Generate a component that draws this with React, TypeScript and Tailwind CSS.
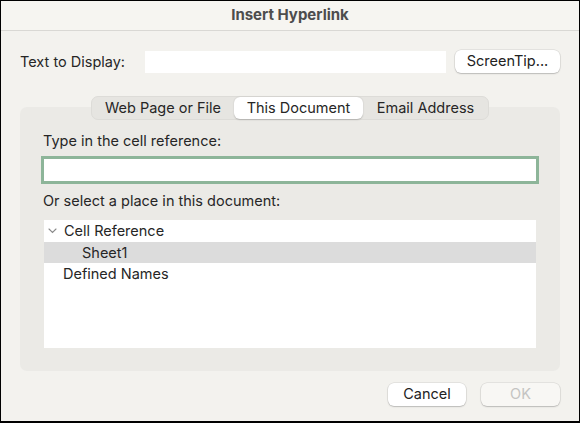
const TABS = [
  { label: "Web Page or File", width: "w-[142px]", active: false },
  { label: "This Document", width: "w-[129px]", active: true },
  { label: "Email Address", width: "w-[125px]", active: false },
];

function DialogButton({
  label,
  width,
  disabled,
}: {
  label: string;
  width: string;
  disabled?: boolean;
}) {
  return (
    <button
      type="button"
      className={`h-[23px] ${width} rounded-[6px] text-[14.5px] leading-none shadow-[0_0_0_0.5px_rgba(0,0,0,0.12),0_1px_1.5px_rgba(0,0,0,0.18)] ${
        disabled ? "bg-[#f8f7f4] text-[#c4c4c2]" : "bg-white text-[#222]"
      }`}
    >
      {label}
    </button>
  );
}

function Chevron() {
  return (
    <svg width="9" height="6" viewBox="0 0 9 6" className="mr-[7px]">
      <path d="M1 1l3.5 3.5L8 1" fill="none" stroke="#8a8a8a" strokeWidth="1.1" strokeLinecap="round" />
    </svg>
  );
}

export default function App() {
  return (
    <div
      className="flex h-[423px] w-[580px] flex-col overflow-hidden border border-b-2 border-black bg-[#f3f2ee] text-[14.5px] text-[#262626]"
      style={{ fontFamily: "Inter, 'Liberation Sans', sans-serif" }}
    >
      <div className="flex h-[30px] items-center justify-center border-b border-[#d9d8d4] bg-[#f6f5f1]">
        <span className="text-[15px] font-bold text-[#4d4d4d]">Insert Hyperlink</span>
      </div>

      <div className="mt-[19px] flex items-center pl-[19px]">
        <label className="w-[125px]">Text to Display:</label>
        <div className="h-[22px] w-[301px] bg-white" />
        <div className="ml-[9px]">
          <DialogButton label="ScreenTip..." width="w-[105px]" />
        </div>
      </div>

      <div className="mx-[19px] mt-[23px] flex flex-col">
        <div className="relative z-10 mx-auto flex h-[24px] items-center rounded-[7px] border border-[#dddcd8] bg-[#e6e5e1]">
          {TABS.map((tab) => (
            <div
              key={tab.label}
              className={`flex h-[22px] items-center justify-center rounded-[6px] ${tab.width} ${
                tab.active ? "bg-white shadow-[0_0.5px_1.5px_rgba(0,0,0,0.2)]" : ""
              }`}
            >
              {tab.label}
            </div>
          ))}
        </div>

        <div className="-mt-[13px] flex h-[264px] flex-col rounded-[7px] bg-[#ebeae6] px-[24px] pt-[25px]">
          <div className="-ml-[1px] h-[18px] leading-[18px]">Type in the cell reference:</div>
          <div className="mt-[9px] h-[22px] bg-white ring-[3px] ring-[#8db599]" />
          <div className="-ml-[1px] mt-[11px] h-[18px] leading-[18px]">Or select a place in this document:</div>
          <div className="mt-[10px] flex h-[128px] flex-col bg-white">
            <div className="flex h-[22px] items-center pl-[4px]">
              <Chevron />
              <span>Cell Reference</span>
            </div>
            <div className="flex h-[21px] items-center bg-[#dcdcdc] pl-[38px]">Sheet1</div>
            <div className="flex h-[21px] items-center pl-[19px]">Defined Names</div>
          </div>
        </div>
      </div>

      <div className="mt-[12px] flex justify-end gap-[15px] pr-[19px]">
        <DialogButton label="Cancel" width="w-[78px]" />
        <DialogButton label="OK" width="w-[79px]" disabled />
      </div>
    </div>
  );
}
